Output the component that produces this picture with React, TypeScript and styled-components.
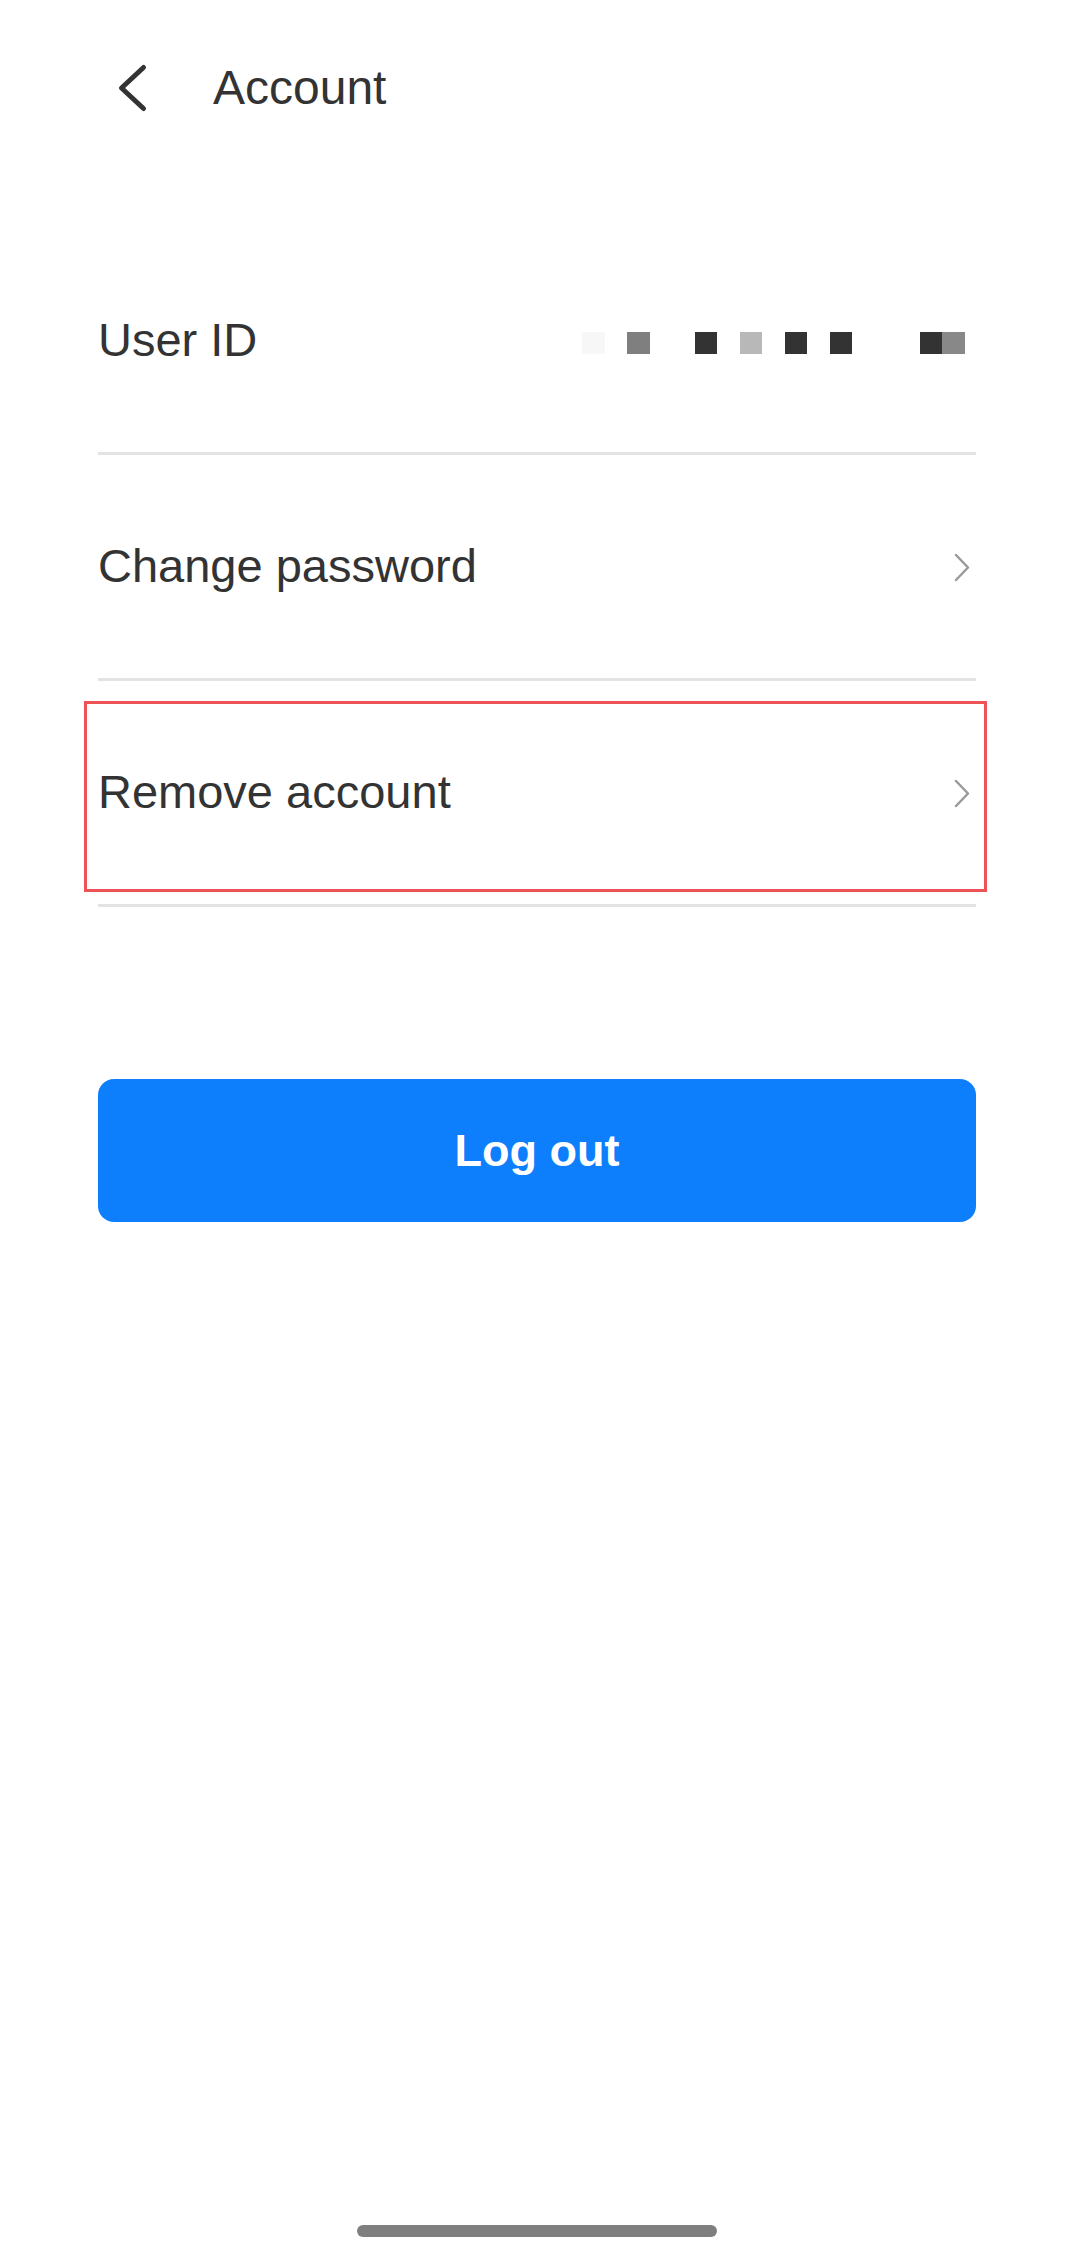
import React, { ReactElement } from 'react';
import styled, { createGlobalStyle } from 'styled-components';

const GlobalStyle = createGlobalStyle`
  html, body {
    margin: 0;
    padding: 0;
    background: #ffffff;
  }
  body {
    font-family: 'Liberation Sans', Arial, sans-serif;
    color: #333333;
  }
`;

const Page = styled.div`
  width: 1071px;
  height: 2257px;
  background: #ffffff;
  display: flex;
  flex-direction: column;
`;

const Header = styled.div`
  height: 176px;
  margin-bottom: 53px;
  padding-left: 116px;
  display: flex;
  flex-direction: row;
  align-items: center;

  h1 {
    margin: 0 0 0 65px;
    font-size: 48px;
    font-weight: 400;
    line-height: 1.15;
    color: #333333;
  }
`;

const BackButton = styled.svg`
  width: 32px;
  height: 50px;
  flex-shrink: 0;
`;

const List = styled.div`
  margin-left: 98px;
  width: 878px;
  display: flex;
  flex-direction: column;
`;

const Row = styled.div`
  position: relative; /* red highlight box sits over the row */
  height: 223px;
  border-bottom: 3px solid #e3e3e3;
  display: flex;
  flex-direction: row;
  align-items: center;
  justify-content: space-between;
`;

const Label = styled.span`
  font-size: 47px;
  line-height: 1.15;
  color: #333333;
`;

const Chevron = styled.svg`
  width: 20px;
  height: 31px;
  margin-right: 3px;
  margin-top: 2px;
`;

const MaskedId = styled.div`
  display: flex;
  flex-direction: row;
  margin-top: 5px;
  margin-right: 11px;
`;

const Pixel = styled.span<{ $color: string; $gap: number; $w: number }>`
  display: block;
  width: ${(p) => p.$w}px;
  height: 22px;
  margin-left: ${(p) => p.$gap}px;
  background: ${(p) => p.$color};
`;

const Highlight = styled.div`
  position: absolute;
  top: 20px;
  bottom: 12px;
  left: -14px;
  right: -11px;
  border: 3px solid #ee5257;
  pointer-events: none;
`;

const LogoutButton = styled.button`
  margin: 172px 0 0 98px;
  width: 878px;
  height: 143px;
  border: none;
  border-radius: 16px;
  background: #0d7ffd;
  color: #ffffff;
  font-family: 'Liberation Sans', Arial, sans-serif;
  font-size: 45px;
  font-weight: 700;
  cursor: pointer;
`;

const HomeIndicator = styled.div`
  margin: auto auto 20px 357px;
  width: 360px;
  height: 12px;
  border-radius: 6px;
  background: #7f7f7f;
`;

const pixels = [
  { color: '#f7f7f7', gap: 0, w: 23 },
  { color: '#7f7f7f', gap: 22, w: 23 },
  { color: '#333333', gap: 45, w: 22 },
  { color: '#b8b8b8', gap: 23, w: 22 },
  { color: '#333333', gap: 23, w: 22 },
  { color: '#333333', gap: 23, w: 22 },
  { color: '#333333', gap: 68, w: 22 },
  { color: '#888888', gap: 0, w: 23 },
];

const RowChevron = (): ReactElement => (
  <Chevron viewBox="0 0 20 31">
    <path
      d="M3 3 L15 15.5 L3 28"
      fill="none"
      stroke="#9a9a9a"
      strokeWidth="2.5"
      strokeLinecap="round"
      strokeLinejoin="round"
    />
  </Chevron>
);

const App = (): ReactElement => {
  return (
    <Page>
      <GlobalStyle />
      <Header>
        <BackButton viewBox="0 0 32 50">
          <path
            d="M27.5 4.5 L5.5 25 L27.5 45.5"
            fill="none"
            stroke="#333333"
            strokeWidth="5"
            strokeLinecap="round"
            strokeLinejoin="round"
          />
        </BackButton>
        <h1>Account</h1>
      </Header>
      <List>
        <Row>
          <Label>User ID</Label>
          <MaskedId>
            {pixels.map((p, i) => (
              <Pixel key={i} $color={p.color} $gap={p.gap} $w={p.w} />
            ))}
          </MaskedId>
        </Row>
        <Row>
          <Label>Change password</Label>
          <RowChevron />
        </Row>
        <Row>
          <Label>Remove account</Label>
          <RowChevron />
          <Highlight />
        </Row>
      </List>
      <LogoutButton>Log out</LogoutButton>
      <HomeIndicator />
    </Page>
  );
};

export default App;
